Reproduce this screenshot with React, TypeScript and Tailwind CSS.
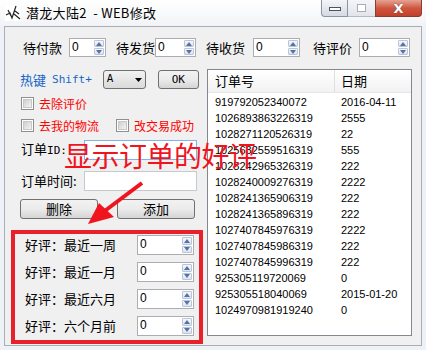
const cjk = "font-['Noto_Sans_CJK_SC','Noto_Sans',sans-serif]";
const mono = "font-['DejaVu_Sans_Mono','Liberation_Mono',monospace]";

const orders: [string, string][] = [
  ['919792052340072', '2016-04-11'],
  ['1026893863226319', '2555'],
  ['1028271120526319', '22'],
  ['1025632559516319', '555'],
  ['1028242965326319', '222'],
  ['1028240009276319', '2222'],
  ['1028241365906319', '222'],
  ['1028241365896319', '222'],
  ['1027407845976319', '2222'],
  ['1027407845986319', '222'],
  ['1027407845996319', '222'],
  ['925305119720069', '0'],
  ['925305518040069', '2015-01-20'],
  ['1024970981919240', '0'],
];

const ratings = ['好评：最近一周', '好评：最近一月', '好评：最近六月', '好评：六个月前'];

function SpinHalf({ up }: { up: boolean }) {
  return (
    <div className="flex flex-1 items-center justify-center rounded-[1px] border border-[#b9c6d8] bg-gradient-to-b from-[#f6f8fb] to-[#dde4ee]">
      <svg width="6" height="4" viewBox="0 0 6 4">
        <polygon points={up ? '3,0 6,4 0,4' : '0,0 6,0 3,4'} fill="#5471a8" />
      </svg>
    </div>
  );
}

function Spin({ w, h = 19 }: { w: number; h?: number }) {
  return (
    <div
      className="flex shrink-0 border border-[#abadb3] bg-white"
      style={{ width: w, height: h }}
    >
      <span className="flex-1 pl-[2px] font-['Liberation_Sans',sans-serif] text-[12px] leading-[17px] text-black">
        0
      </span>
      <div className="flex w-[12px] flex-col gap-px p-px">
        <SpinHalf up />
        <SpinHalf up={false} />
      </div>
    </div>
  );
}

function Btn({ w, children, className = '' }: { w: number; children: React.ReactNode; className?: string }) {
  return (
    <div
      className={`flex h-[20px] shrink-0 items-center justify-center rounded-[3px] border border-[#707070] bg-gradient-to-b from-[#f2f2f2] via-[#ebebeb] to-[#d5d5d5] text-[13px] leading-[16px] text-black ${className}`}
      style={{ width: w }}
    >
      {children}
    </div>
  );
}

function Check({ label }: { label: string }) {
  return (
    <div className="flex h-[13px] shrink-0 items-center gap-[5px] whitespace-nowrap">
      <div className="flex h-[13px] w-[13px] shrink-0 items-center justify-center border border-[#8e8f8f] bg-white">
        <div className="h-[9px] w-[9px] border border-[#c8c8c8] bg-gradient-to-br from-[#cfcfcf] to-[#f4f4f4]" />
      </div>
      <span className="text-[12px] leading-[13px] text-[#ff0000]">{label}</span>
    </div>
  );
}

export default function App() {
  return (
    <div className={`relative h-[350px] w-[426px] overflow-hidden bg-[#eef1f5] ${cjk}`}>
      {/* title bar */}
      <div className="flex h-[26px] items-start bg-gradient-to-b from-white to-[#f1f3f6]">
        <svg className="ml-[5px] mt-[5px]" width="16" height="16" viewBox="0 0 16 16">
          <rect width="16" height="16" fill="#fff" />
          <path d="M1 10 L5 8 L7 13 L11 1 M9 9 L15 14 M10 6 L14 9 M3 5 L6 11" stroke="#222" strokeWidth="1.2" fill="none" />
        </svg>
        <span className="ml-[5px] mt-[5px] text-[13px] leading-[16px] tracking-[0.3px] text-black">潜龙大陆2&nbsp; - WEB修改</span>
        <div className="ml-auto mr-[4px] flex h-[17px]">
          <div className="flex w-[27px] items-center justify-center rounded-bl-[4px] border border-t-0 border-[#8a94a2] bg-gradient-to-b from-[#f3f5f8] to-[#d5dbe3]">
            <div className="mt-[2px] h-[4px] w-[12px] border border-[#4a5360] bg-white" />
          </div>
          <div className="flex w-[27px] items-center justify-center border-b border-[#b3bac4] bg-gradient-to-b from-[#f3f5f8] to-[#e1e5ea]">
            <div className="h-[8px] w-[9px] border border-[#a6aeb9] bg-white" />
          </div>
          <div className="flex w-[47px] items-center justify-center rounded-br-[4px] border border-t-0 border-[#8a3b32] bg-gradient-to-b from-[#e3a393] via-[#d0563f] to-[#c2402b]">
            <span className="font-['DejaVu_Sans',sans-serif] text-[13px] font-bold leading-[13px] text-white [text-shadow:0_0_1px_#333]">X</span>
          </div>
        </div>
      </div>

      {/* client area */}
      <div className="ml-[4px] h-[320px] w-[418px] border border-[#a7aeb8] bg-[#f0f0f0] text-black">
        <div className="mt-[11px] flex h-[19px] items-center text-[13px] leading-[19px]">
          <span className="ml-[18px] w-[38px] shrink-0 whitespace-nowrap">待付款</span>
          <div className="ml-[8px]"><Spin w={37} /></div>
          <span className="ml-[10px] w-[37px] shrink-0 whitespace-nowrap">待发货</span>
          <div className="ml-[2px]"><Spin w={41} /></div>
          <span className="ml-[10px] w-[38px] shrink-0 whitespace-nowrap">待收货</span>
          <div className="ml-[9px]"><Spin w={47} /></div>
          <span className="ml-[13px] w-[38px] shrink-0 whitespace-nowrap">待评价</span>
          <div className="ml-[8px]"><Spin w={51} /></div>
        </div>

        <div className="mt-[12px] flex">
          {/* left column */}
          <div className="ml-[6px] flex w-[192px] shrink-0 flex-col">
            <div className="mt-[1px] flex h-[19px] items-center">
              <span className="ml-[9px] text-[13px] leading-[19px] text-[#1465c8]">热键</span>
              <span className={`ml-[6px] ${mono} text-[11px] leading-[19px] text-[#1465c8]`}>Shift+</span>
              <div className={`ml-[11px] flex h-[19px] w-[43px] shrink-0 items-center justify-between rounded-[3px] border border-[#707070] bg-gradient-to-b from-[#f2f2f2] to-[#dadada] px-[3px] ${mono} text-[11px]`}>
                A
                <svg width="7" height="4" viewBox="0 0 7 4">
                  <polygon points="0,0 7,0 3.5,4" fill="#000" />
                </svg>
              </div>
              <Btn w={41} className={`ml-[12px] !h-[19px] ${mono} !text-[11px]`}>OK</Btn>
            </div>

            <div className="ml-[10px] mt-[8px]"><Check label="去除评价" /></div>
            <div className="ml-[10px] mt-[9px] flex gap-[17px]">
              <Check label="去我的物流" />
              <Check label="改交易成功" />
            </div>

            <div className="mt-[8px] flex h-[20px] items-center">
              <span className="ml-[10px] whitespace-nowrap text-[13px] leading-[20px]">订单<span className={`${mono} text-[11px]`}>ID:</span></span>
              <div className="ml-auto mr-[6px] h-[20px] w-[113px] shrink-0 border border-[#7eb4ea] bg-white" />
            </div>
            <div className="mt-[11px] flex h-[20px] items-center">
              <span className="ml-[10px] whitespace-nowrap text-[13px] leading-[20px]">订单时间:</span>
              <div className="ml-auto mr-[6px] h-[20px] w-[113px] shrink-0 border border-[#c5c9d0] bg-white" />
            </div>

            <div className="mt-[8px] flex">
              <Btn w={78} className="ml-[9px]">删除</Btn>
              <Btn w={78} className="ml-[19px]">添加</Btn>
            </div>

            <div className="mt-[11px] flex h-[114px] flex-col gap-[7px] border-4 border-[#e8202a] pl-[10px] pr-[5px] pt-px">
              {ratings.map((r) => (
                <div key={r} className="flex h-[20px] shrink-0 items-center justify-between">
                  <span className="whitespace-nowrap text-[13px] leading-[20px]">{r}</span>
                  <Spin w={57} h={20} />
                </div>
              ))}
            </div>
          </div>

          {/* order list */}
          <div className="ml-[4px] flex h-[267px] w-[205px] shrink-0 flex-col border border-[#828790] bg-white">
            <div className="flex h-[23px] items-center border-b border-[#e5e5e5] bg-gradient-to-b from-white to-[#f2f2f2] text-[13px]">
              <span className="flex h-full w-[127px] items-center border-r border-[#e0e0e0] pl-[7px]">订单号</span>
              <span className="pl-[6px]">日期</span>
            </div>
            <div className="pt-px font-['Liberation_Sans',sans-serif] text-[11px] leading-[16px]">
              {orders.map(([id, date]) => (
                <div key={id} className="flex">
                  <span className="w-[127px] pl-[7px]">{id}</span>
                  <span className="pl-[6px]">{date}</span>
                </div>
              ))}
            </div>
          </div>
        </div>
      </div>

      {/* annotation overlay */}
      <div className="absolute left-[64px] top-[139px] text-[28px] leading-[32px] tracking-[-0.5px] text-[#f0141e]">
        显示订单的好评
      </div>
      <svg className="absolute left-0 top-0" width="426" height="350" viewBox="0 0 426 350">
        <line x1="142" y1="183" x2="102" y2="213" stroke="#f0141e" strokeWidth="4" />
        <polygon points="88,224 99,203 114,217" fill="#f0141e" />
      </svg>
    </div>
  );
}
